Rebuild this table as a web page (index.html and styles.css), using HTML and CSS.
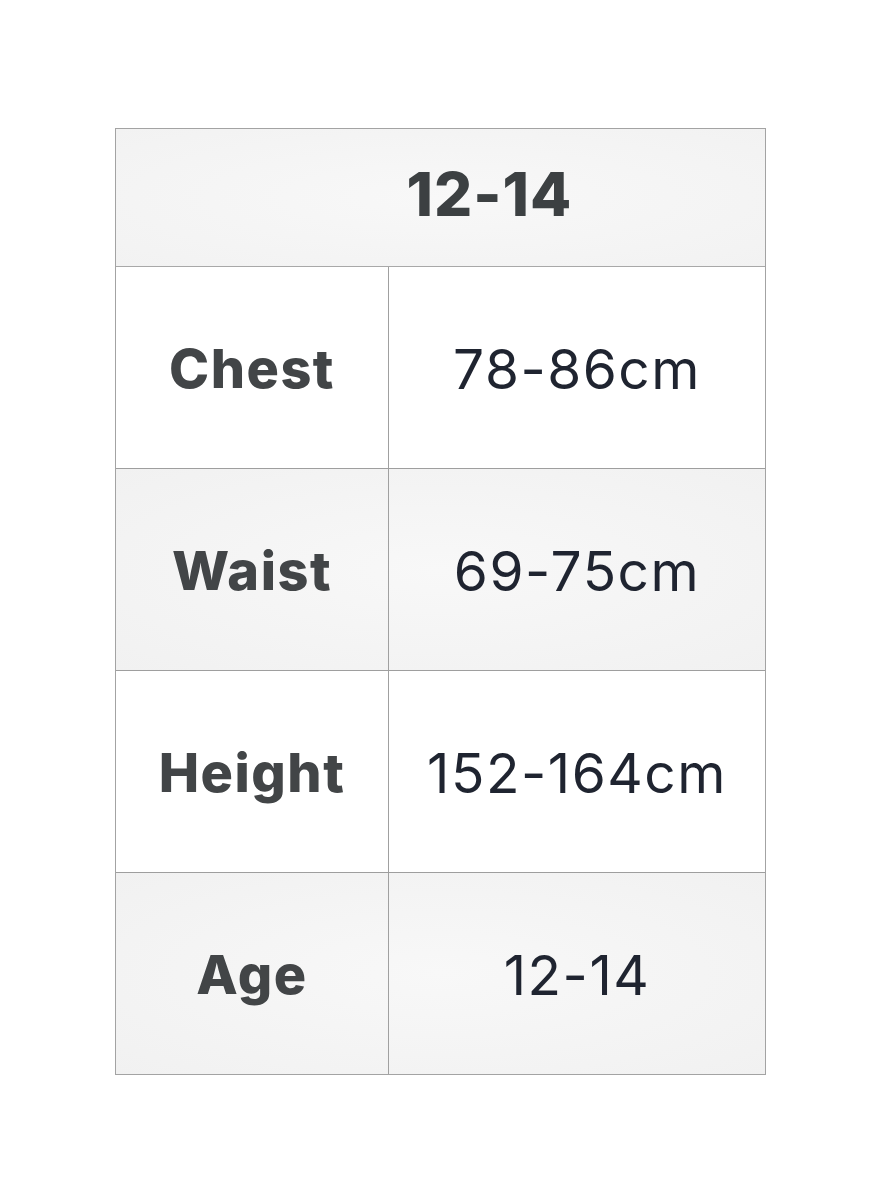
FILE: index.html
```html
<!DOCTYPE html>
<html lang="en">
<head>
<meta charset="utf-8">
<title>Size chart 12-14</title>
<link rel="stylesheet" href="styles.css">
</head>
<body>
<div class="page">
  <div class="chart">
    <div class="chart-head"><span class="head-text">12-14</span></div>
    <div class="chart-row row-light">
      <div class="cell label">Chest</div>
      <div class="cell value">78-86cm</div>
    </div>
    <div class="chart-row row-grey">
      <div class="cell label">Waist</div>
      <div class="cell value">69-75cm</div>
    </div>
    <div class="chart-row row-light">
      <div class="cell label">Height</div>
      <div class="cell value">152-164cm</div>
    </div>
    <div class="chart-row row-grey">
      <div class="cell label">Age</div>
      <div class="cell value">12-14</div>
    </div>
  </div>
</div>
</body>
</html>
```

FILE: styles.css
```css
html, body {
  margin: 0;
  padding: 0;
  background: #ffffff;
}

.page {
  width: 889px;
  height: 1200px;
  padding-top: 128px;
  padding-left: 115px;
  box-sizing: border-box;
}

.chart {
  width: 651px;
  border: 1px solid #a3a3a3;
  box-sizing: border-box;
  display: flex;
  flex-direction: column;
}

.chart-head {
  height: 138px;
  display: flex;
  align-items: center;
  justify-content: center;
  padding-left: 98px;
  padding-bottom: 8px;
  box-sizing: border-box;
  background: radial-gradient(ellipse at center, #f8f8f8 0%, #f2f2f2 100%);
  border-bottom: 1px solid #a8a8a8;
}

.head-text {
  font-family: "Inter", "Liberation Sans", sans-serif;
  font-weight: 800;
  font-size: 60px;
  letter-spacing: 1px;
  color: #3c4042;
}

.chart-row {
  display: grid;
  grid-template-columns: 273px 1fr;
  height: 201px;
  border-top: 1px solid #9e9e9e;
}

.chart-row:nth-child(2) {
  border-top: none;
}

.row-light {
  background: #ffffff;
}

.row-grey {
  background: radial-gradient(ellipse at center, #f8f8f8 0%, #f1f1f1 100%);
}

.cell {
  display: flex;
  align-items: center;
  justify-content: center;
  padding-top: 2px;
  box-sizing: border-box;
}

.label {
  border-right: 1px solid #a0a0a0;
  font-family: "Inter", "Liberation Sans", sans-serif;
  font-weight: 800;
  font-size: 54px;
  letter-spacing: 1.5px;
  color: #424547;
}

.value {
  font-family: "Inter", "Liberation Sans", sans-serif;
  font-weight: 400;
  font-size: 55px;
  letter-spacing: 1.5px;
  color: #1f2430;
}
```
